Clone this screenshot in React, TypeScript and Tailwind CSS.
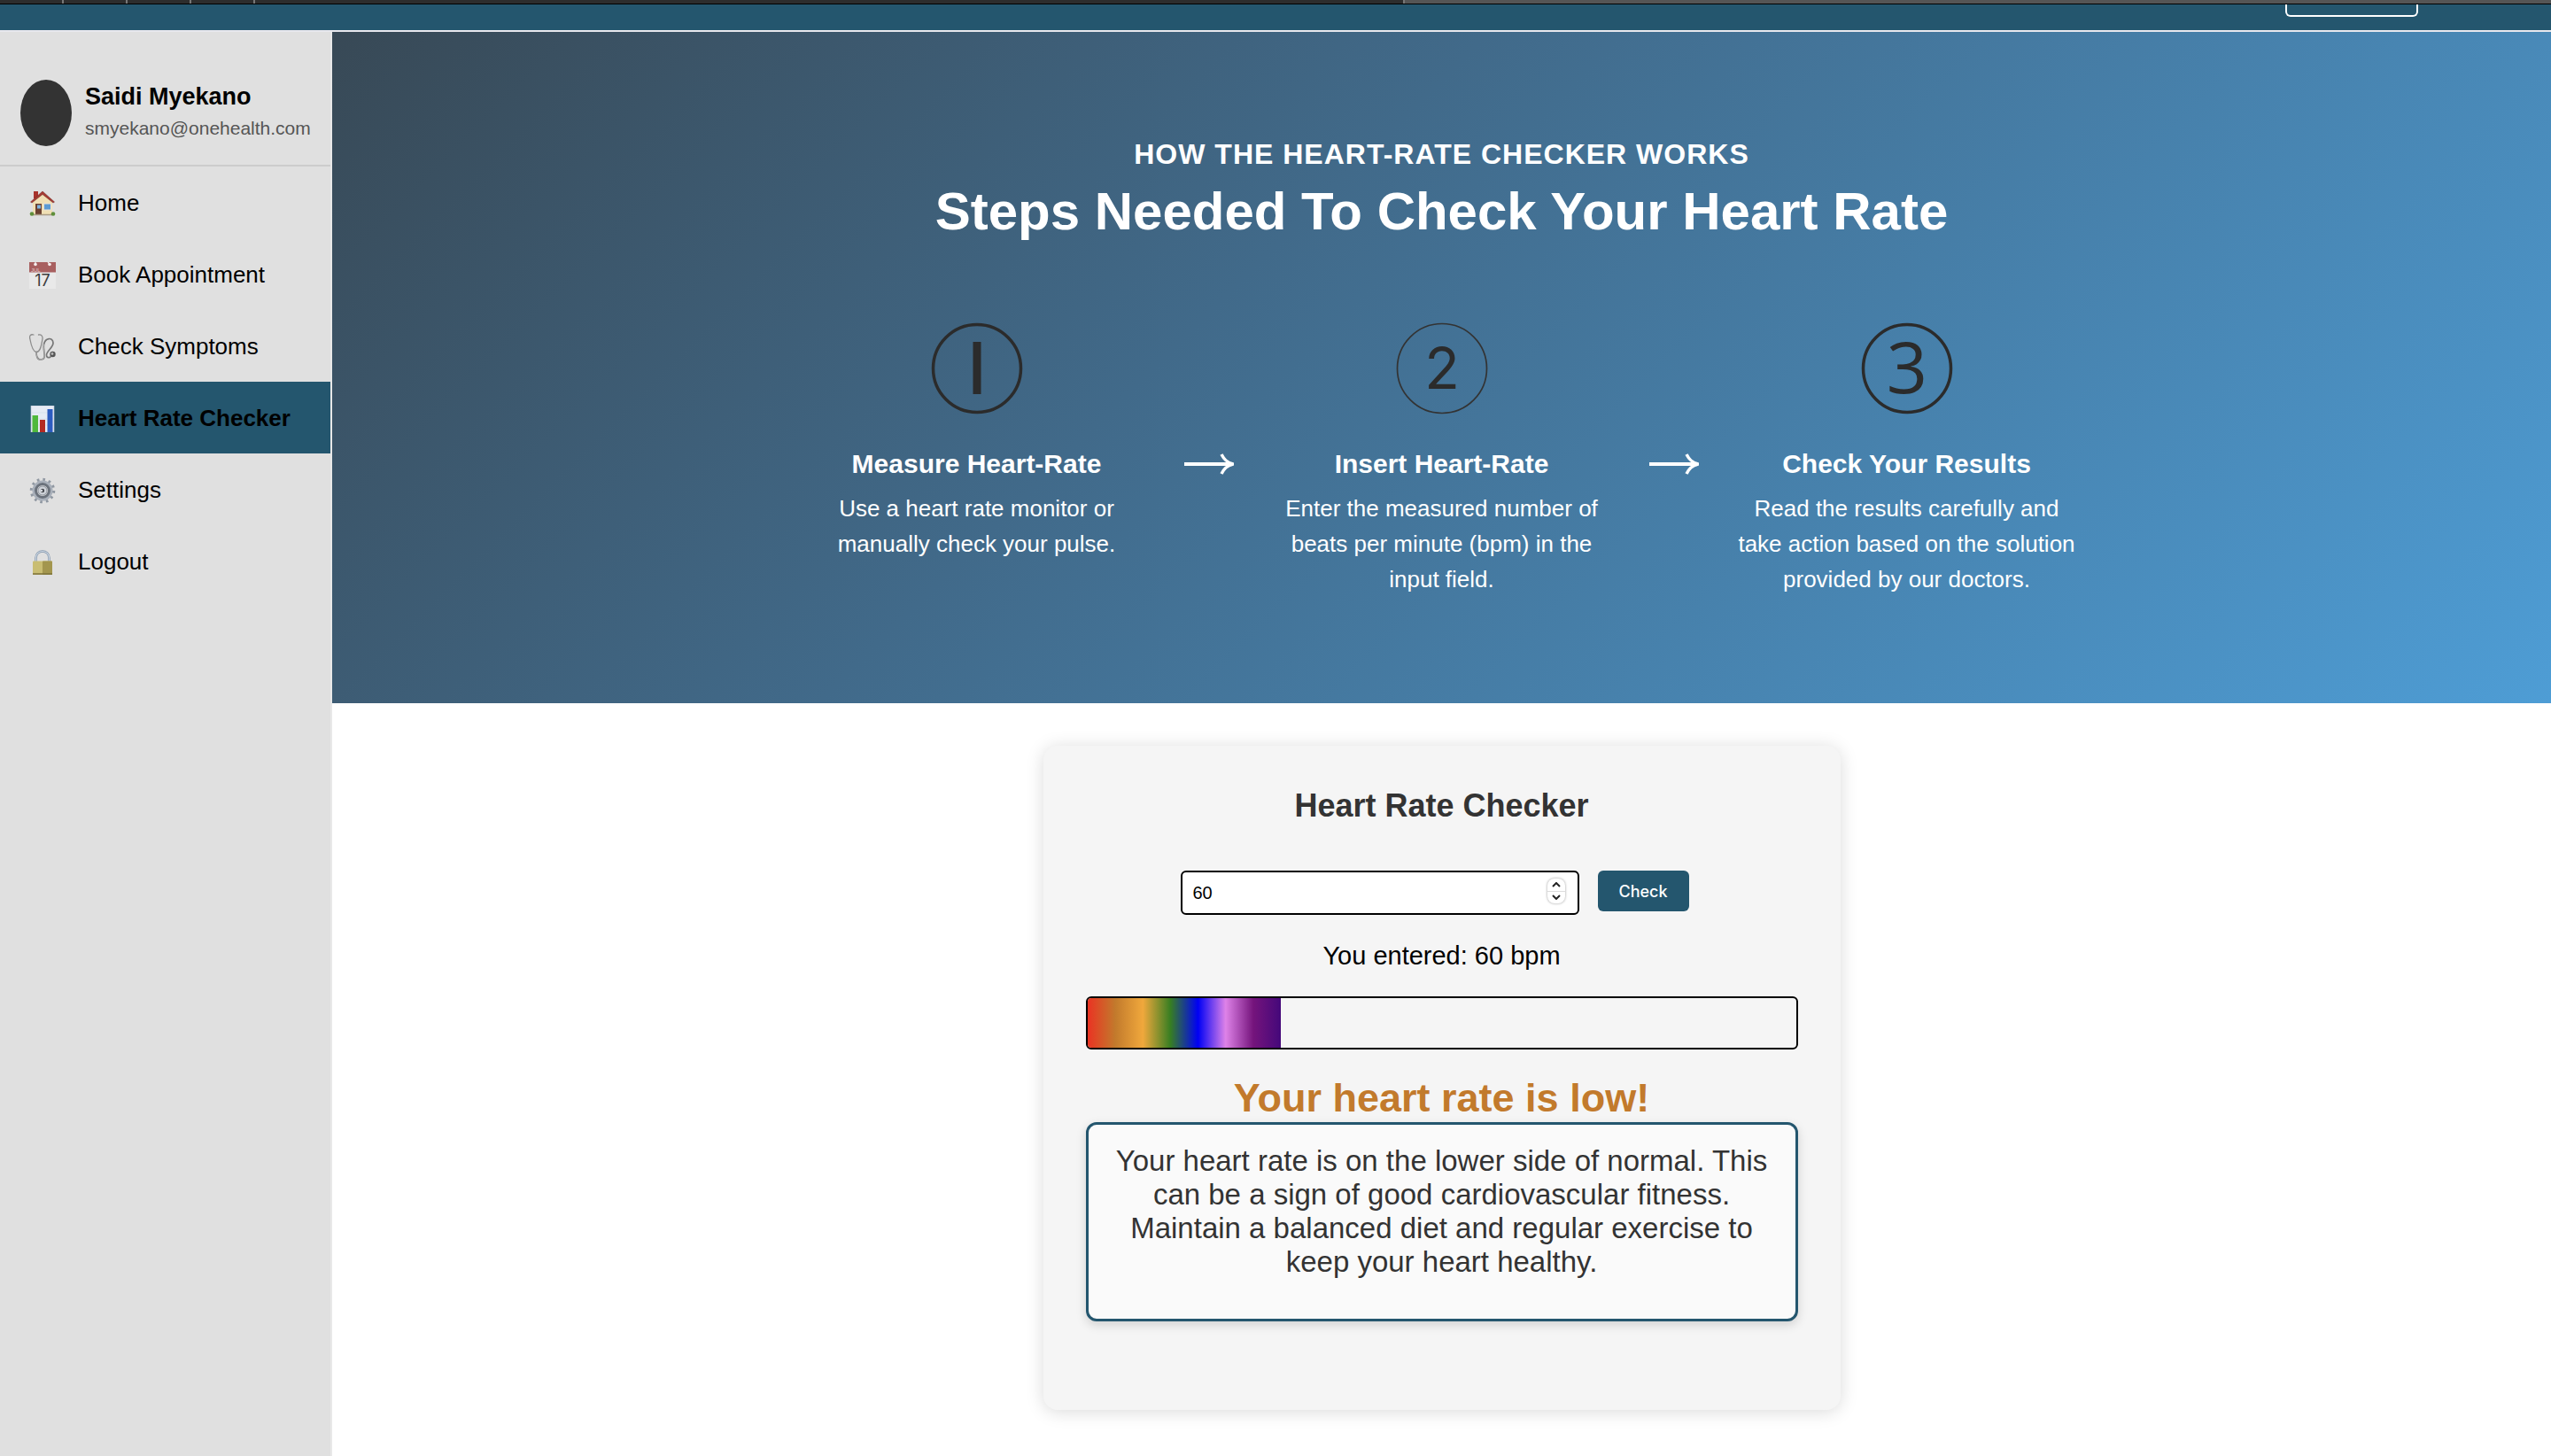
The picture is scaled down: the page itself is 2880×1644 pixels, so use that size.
import { useState, type ReactNode } from "react";

function HomeIcon() {
  return (
    <svg viewBox="0 0 30 30" className="size-[30px] shrink-0" aria-hidden="true">
      <rect x="5" y="1" width="5" height="8" fill="#a8322c" />
      <path d="M4 13 15 3l11 10v15H4z" fill="#f0dfb4" />
      <path d="M1.500 13 15 1l13.500 12-1.500 1L15 4.500 3 14z" fill="#a53a32" stroke="#6e2a26" strokeWidth=".5" />
      <rect x="7" y="15" width="7" height="13" fill="#6b4030" />
      <rect x="9" y="16.500" width="4" height="4" fill="#7fb4e0" />
      <rect x="16.500" y="15" width="8" height="7" fill="#5d9bd3" stroke="#e9e4d8" />
      <path d="M4 27.500h22" stroke="#a99b84" strokeWidth="1.500" />
      <circle cx="3" cy="26.500" r="2.300" fill="#5f8f3a" />
      <circle cx="27" cy="26.500" r="2.300" fill="#5f8f3a" />
    </svg>
  );
}

function CalendarIcon() {
  return (
    <svg viewBox="0 0 30 30" className="size-[30px] shrink-0" aria-hidden="true">
      <rect width="30" height="30" fill="#e9e9e9" />
      <rect width="30" height="11.500" fill="#a86060" />
      <circle cx="7" cy="2.500" r="1.800" fill="#f4eeee" />
      <circle cx="23" cy="2.500" r="1.800" fill="#f4eeee" />
      <path d="M7 0v2M21 0l2 2" stroke="#f4eeee" strokeWidth="1.200" />
      <text x="2" y="10.500" fontSize="6" fontFamily="Liberation Sans, sans-serif" fill="#e3c9c9">JUL</text>
      <text x="15" y="27" fontSize="18" textAnchor="middle" fontFamily="Inter, sans-serif" fill="#3c3c3c">17</text>
    </svg>
  );
}

function StethoscopeIcon() {
  return (
    <svg viewBox="0 0 30 30" className="size-[30px] shrink-0" aria-hidden="true" fill="none" strokeLinecap="round">
      <path d="M5 1C1.500 0 0 2 .8 5.500 1.800 11 3.500 20 8 20.500c5 0 6-9 7-15C15.300 2.500 13.500.2 10.500 1" stroke="#8c8c8c" strokeWidth="1.300" />
      <path d="M8 20.500c0 5 1 8.500 5 8.500 8 0 2-10 3.500-17 1.500-8 10-8.500 10.500-2 .3 5-7 9-7.500 13.500-.3 3 2 4 4.500 2.500" stroke="#777" strokeWidth="1.700" />
      <path d="M8 20.500c0 5 1 8.500 5 8.500 8 0 2-10 3.500-17" stroke="#d8d8d8" strokeWidth=".5" />
      <circle cx="26.500" cy="23" r="3.200" fill="#555" />
      <circle cx="26" cy="22.500" r="1.400" fill="#b8b8b8" />
    </svg>
  );
}

function ChartIcon() {
  return (
    <svg viewBox="0 0 30 30" className="size-[30px] shrink-0" aria-hidden="true">
      <rect x="2" width="26" height="30" fill="#e6ebf5" stroke="#b9c4d4" strokeWidth=".6" />
      <path d="M2 8h26M2 15h26M2 22h26" stroke="#d2dbe8" strokeWidth=".6" />
      <rect x="3.500" y="11" width="6.500" height="19" fill="#4fb83c" />
      <rect x="12" y="16" width="6" height="14" fill="#b42a22" />
      <rect x="20.500" y="4" width="6" height="26" fill="#2c5cc0" />
    </svg>
  );
}

function GearIcon() {
  return (
    <svg viewBox="0 0 30 30" className="size-[30px] shrink-0" aria-hidden="true" fill="none">
      <circle cx="15" cy="15" r="12.500" stroke="#9098a2" strokeWidth="3.500" strokeDasharray="2.600 3.945" />
      <circle cx="15" cy="15" r="9.500" stroke="#a9b0ba" strokeWidth="4" />
      <circle cx="15" cy="15" r="7.500" stroke="#6b727c" strokeWidth="3" />
      <circle cx="15" cy="15" r="5" fill="#d0d4da" stroke="#8d939c" />
      <circle cx="15" cy="15" r="2.200" fill="#44484e" />
      <circle cx="14" cy="15" r="1.200" fill="#d9dce0" />
    </svg>
  );
}

function LockIcon() {
  return (
    <svg viewBox="0 0 30 30" className="size-[30px] shrink-0" aria-hidden="true">
      <path d="M7.500 15V10c0-10 15-10 15 0v5" fill="none" stroke="#8496ab" strokeWidth="2.600" />
      <path d="M7.500 15V10c0-10 15-10 15 0v5" fill="none" stroke="#cbd6e2" strokeWidth="1.200" />
      <rect x="4" y="13.500" width="22" height="15.500" rx="1" fill="#c9bd72" />
      <rect x="15" y="13.500" width="11" height="15.500" rx="1" fill="#a3964e" />
      <path d="M4 28h22" stroke="#7d733c" strokeWidth="1.500" />
    </svg>
  );
}

const navItems = [
  { label: "Home", icon: <HomeIcon /> },
  { label: "Book Appointment", icon: <CalendarIcon /> },
  { label: "Check Symptoms", icon: <StethoscopeIcon /> },
  { label: "Heart Rate Checker", icon: <ChartIcon />, active: true },
  { label: "Settings", icon: <GearIcon /> },
  { label: "Logout", icon: <LockIcon /> },
];

function Sidebar() {
  return (
    <aside className="w-[375px] shrink-0 border-r-2 border-[#e8e8e8] bg-[#e0e0e0]">
      <div className="flex h-[152px] items-center gap-[15px] border-b-2 border-[#cccccc] pt-8 pl-[23px]">
        <div className="h-[75px] w-[58px] shrink-0 rounded-[50%] bg-[#333333]" />
        <div>
          <p className="text-[27px] leading-[36px] font-bold">Saidi Myekano</p>
          <p className="text-[21px] leading-[36px] text-[#555555]">smyekano@onehealth.com</p>
        </div>
      </div>
      <nav>
        {navItems.map((item) => (
          <a
            key={item.label}
            href="#"
            aria-current={item.active ? "page" : undefined}
            className={
              item.active
                ? "flex h-[81px] items-center gap-[25px] bg-[#24566e] pt-0.5 pl-[33px] text-[26px] font-bold"
                : "flex h-[81px] items-center gap-[25px] pt-0.5 pl-[33px] text-[26px]"
            }
          >
            {item.icon}
            {item.label}
          </a>
        ))}
      </nav>
    </aside>
  );
}

function Arrow() {
  return (
    <svg viewBox="0 0 56 24" className="mt-[148px] h-6 w-14 shrink-0" fill="none" stroke="#fff" aria-hidden="true">
      <path d="M0 12h53" strokeWidth="4" />
      <path d="M42 1c3 6 6 9 13 11-7 2-10 5-13 11" strokeWidth="3.500" />
    </svg>
  );
}

function Step({ badge, title, children }: { badge: ReactNode; title: string; children: ReactNode }) {
  return (
    <div className="flex w-[385px] flex-col items-center text-center">
      <svg viewBox="0 0 104 104" className="size-[104px] overflow-visible" aria-hidden="true">
        {badge}
      </svg>
      <h3 className="mt-[38px] text-[30px] leading-[36px] font-bold">{title}</h3>
      <p className="mt-3 text-[26px] leading-[40px]">{children}</p>
    </div>
  );
}

function Hero() {
  return (
    <section className="flex flex-col items-center bg-[linear-gradient(135deg,#384956,#416a8a_40%,#4e9dd5)] px-8 py-[120px] text-white">
      <p className="text-[32px] leading-[36px] font-bold tracking-[1px]">HOW THE HEART-RATE CHECKER WORKS</p>
      <h1 className="mt-3 text-[60px] leading-[70px] font-bold">Steps Needed To Check Your Heart Rate</h1>
      <div className="mt-[90px] flex items-start gap-[42px]">
        <Step
          title="Measure Heart-Rate"
          badge={
            <>
              <circle cx="52" cy="52" r="49.500" fill="none" stroke="#2b2b2b" strokeWidth="3.500" />
              <rect x="47.500" y="22" width="9" height="59" fill="#2b2b2b" />
            </>
          }
        >
          Use a heart rate monitor or manually check your pulse.
        </Step>
        <Arrow />
        <Step
          title="Insert Heart-Rate"
          badge={
            <>
              <circle cx="52" cy="52" r="50.500" fill="none" stroke="#333" strokeWidth="1.700" />
              <text x="52" y="75" fontSize="65" textAnchor="middle" fontFamily="Inter, sans-serif" fill="#2b2b2b">2</text>
            </>
          }
        >
          Enter the measured number of beats per minute (bpm) in the input field.
        </Step>
        <Arrow />
        <Step
          title="Check Your Results"
          badge={
            <>
              <circle cx="52" cy="52" r="49.500" fill="none" stroke="#2b2b2b" strokeWidth="3.500" />
              <text x="52" y="80" fontSize="81" textAnchor="middle" fontFamily="Open Sans, sans-serif" fill="#2b2b2b">3</text>
            </>
          }
        >
          Read the results carefully and take action based on the solution provided by our doctors.
        </Step>
      </div>
    </section>
  );
}

function CheckerCard() {
  const [value, setValue] = useState("60");
  const [rate, setRate] = useState(60);
  const step = (by: number) => setValue(String(Number(value) + by));

  return (
    <section className="mx-auto mt-12 w-[900px] rounded-2xl bg-[#f5f5f5] px-12 pt-12 pb-[100px] text-center shadow-[0_2px_20px_rgba(0,0,0,0.15)]">
      <h2 className="text-[36px] leading-[40px] font-bold text-[#333333]">Heart Rate Checker</h2>
      <form
        className="mt-[53px] flex items-start justify-center gap-[21px] pr-4"
        onSubmit={(e) => {
          e.preventDefault();
          setRate(Number(value));
        }}
      >
        <div className="flex h-[50px] w-[450px] items-center rounded-md border-2 border-black bg-white pr-[14px] pl-3">
          <input
            type="number"
            aria-label="Heart rate in beats per minute"
            value={value}
            onChange={(e) => setValue(e.target.value)}
            className="min-w-0 flex-1 [appearance:textfield] text-[20px] leading-6 outline-none"
          />
          <div className="mb-1 flex h-7 w-5 flex-col overflow-hidden rounded-lg bg-white shadow-[0_0_3px_rgba(0,0,0,0.4)]">
            <button type="button" aria-label="Increase" onClick={() => step(1)} className="flex flex-1 items-center justify-center border-b border-[#dddddd]">
              <svg viewBox="0 0 10 6" className="h-1.5 w-2.5" fill="none" stroke="#222" strokeWidth="2">
                <path d="M1 5 5 1l4 4" />
              </svg>
            </button>
            <button type="button" aria-label="Decrease" onClick={() => step(-1)} className="flex flex-1 items-center justify-center">
              <svg viewBox="0 0 10 6" className="h-1.5 w-2.5" fill="none" stroke="#222" strokeWidth="2">
                <path d="m1 1 4 4 4-4" />
              </svg>
            </button>
          </div>
        </div>
        <button type="submit" className="h-[46px] w-[103px] rounded-md bg-[#24566e] font-[Inter,sans-serif] text-[18px] font-medium text-white">
          Check
        </button>
      </form>
      <p className="mt-[29px] text-[29px] leading-[34px]">You entered: {rate} bpm</p>
      <div className="mt-[29px] h-[60px] overflow-hidden rounded-md border-2 border-black">
        <div
          className="h-full bg-[linear-gradient(to_right,#ea3323,#c27a2c,#f0a83c,#377e22,#0000f5,#de82e8,#75147c,#44087a)]"
          style={{ width: `${(rate / 220) * 100}%` }}
        />
      </div>
      <p className="mt-7 text-[45px] leading-[54px] font-bold text-[#c27a2c]">Your heart rate is low!</p>
      <div className="rounded-xl border-3 border-[#24566e] bg-[#fafafa] px-6 pt-[22px] pb-[45px] shadow-[0_4px_12px_rgba(0,0,0,0.15)]">
        <p className="text-[33px] leading-[38px] text-[#333333]">
          Your heart rate is on the lower side of normal. This can be a sign of good cardiovascular fitness. Maintain a
          balanced diet and regular exercise to keep your heart healthy.
        </p>
      </div>
    </section>
  );
}

export default function App() {
  return (
    <div className="flex min-h-screen flex-col bg-white font-['Liberation_Sans',Arial,sans-serif] text-black">
      <div className="flex h-[5px] border-b border-black">
        <div className="flex w-[55%] bg-[#2d2d2d]">
          <div className="w-[72px] border-r-2 border-[#777777]" />
          <div className="w-[72px] border-r-2 border-[#777777]" />
          <div className="w-[72px] border-r-2 border-[#777777]" />
          <div className="w-[72px] border-r-2 border-[#777777]" />
        </div>
        <div className="flex-1 border-l-2 border-[#777777] bg-[#555555]" />
      </div>
      <header className="flex h-[31px] items-start justify-end border-b-2 border-[#e8e8ee] bg-[#24566e] pr-[150px]">
        <button type="button" aria-label="Account" className="h-[14px] w-[150px] rounded-b-md border-2 border-t-0 border-white" />
      </header>
      <div className="flex flex-1">
        <Sidebar />
        <main className="min-w-0 flex-1">
          <Hero />
          <CheckerCard />
        </main>
      </div>
    </div>
  );
}
